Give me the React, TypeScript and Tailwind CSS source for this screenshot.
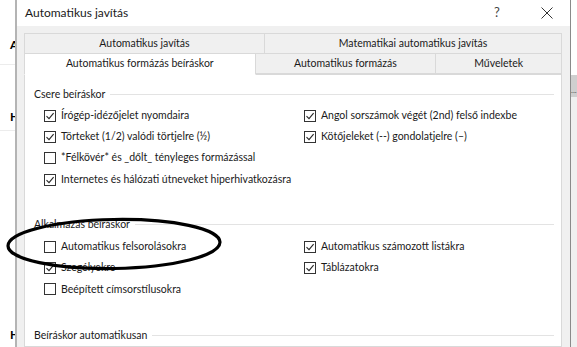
import React from "react";

const font = { fontFamily: "Lato, 'Noto Sans', sans-serif" };

const Check = ({ checked }: { checked: boolean }) => (
    <span className="w-[12px] h-[12px] border border-[#333333] bg-white flex items-center justify-center shrink-0">
        {checked && (
            <svg width="10" height="10" viewBox="0 0 10 10">
                <path d="M1.5 5.2 L4 7.6 L8.6 2.2" fill="none" stroke="#262626" strokeWidth="1.1" />
            </svg>
        )}
    </span>
);

const Option = ({ label, checked }: { label: string; checked: boolean }) => (
    <div className="h-[21.3px] flex items-center gap-[5px]">
        <Check checked={checked} />
        <span className="text-[#1a1a1a] whitespace-nowrap">{label}</span>
    </div>
);

const GroupHeader = ({ title }: { title: string }) => (
    <div className="h-[21px] flex items-center pr-[7px]">
        <span className="text-[#1a1a1a] whitespace-nowrap">{title}</span>
        <div className="flex-1 h-px bg-[#e3e3e3] ml-[5px]" />
    </div>
);

const Tab = ({ label, w, selected }: { label: string; w: string; selected?: boolean }) => (
    <div
        className={`${w} h-[21px] flex items-center justify-center border border-[#d9d9d9] -ml-px first:ml-0 ${
            selected ? "bg-white border-b-white h-[22px] relative z-10" : "bg-[#f0f0f0]"
        }`}
    >
        {label}
    </div>
);

export default function App() {
    return (
        <div className="w-[577px] h-[347px] overflow-hidden bg-white flex relative text-[10.5px]" style={font}>
            {/* window behind, left part */}
            <div className="w-[15px] shrink-0 flex flex-col">
                <div className="h-[38px] shrink-0" />
                <div className="pl-[10px] font-bold text-[12px] text-black h-[14px] leading-[14px] shrink-0">A</div>
                <div className="h-[12px] shrink-0" />
                <div className="h-px bg-[#ececec] shrink-0" />
                <div className="h-[45px] shrink-0" />
                <div className="pl-[10px] font-bold text-[12px] text-black h-[14px] leading-[14px] shrink-0">H</div>
                <div className="h-[6px] shrink-0" />
                <div className="h-px bg-[#ececec] shrink-0" />
                <div className="h-[197px] shrink-0" />
                <div className="pl-[10px] font-bold text-[12px] text-black h-[14px] leading-[14px] shrink-0">H</div>
            </div>

            {/* dialog */}
            <div className="w-[556px] shrink-0 border-l-2 border-r border-l-[#b4b4b4] border-r-[#8a8a8a] bg-[#f0f0f0] flex flex-col">
                <div className="h-[26px] shrink-0 bg-white flex items-center pl-[8px] text-[12px] text-[#1a1a1a]">
                    <span className="flex-1">Automatikus javítás</span>
                    <span className="w-[20px] text-center text-[13px] text-[#444] mr-[34px]">?</span>
                    <svg width="12" height="12" viewBox="0 0 12 12" className="mr-[17px]">
                        <path d="M0.5 0.5 L11.5 11.5 M11.5 0.5 L0.5 11.5" stroke="#333" strokeWidth="1" />
                    </svg>
                </div>

                <div className="pl-[7px] pr-[8px] pt-[7px] text-[#1a1a1a] flex-1 flex flex-col min-h-0">
                    <div className="flex shrink-0">
                        <Tab label="Automatikus javítás" w="w-[241px]" />
                        <Tab label="Matematikai automatikus javítás" w="w-[298px]" />
                    </div>
                    <div className="flex -mt-px shrink-0">
                        <Tab label="Automatikus formázás beíráskor" w="w-[232px]" selected />
                        <Tab label="Automatikus formázás" w="w-[182px]" />
                        <Tab label="Műveletek" w="w-[127px]" />
                    </div>

                    <div className="bg-white border border-[#d9d9d9] -mt-px flex-1 pl-[9px] pt-[9px]">
                        <GroupHeader title="Csere beíráskor" />
                        <div className="flex pl-[10px]">
                            <div className="w-[260px]">
                                <Option label="Írógép-idézőjelet nyomdaira" checked />
                                <Option label="Törteket (1/2) valódi törtjelre (½)" checked />
                                <Option label="*Félkövér* és _dőlt_ tényleges formázással" checked={false} />
                                <Option label="Internetes és hálózati útneveket hiperhivatkozásra" checked />
                            </div>
                            <div className="flex-1">
                                <Option label="Angol sorszámok végét (2nd) felső indexbe" checked />
                                <Option label="Kötőjeleket (--) gondolatjelre (–)" checked />
                            </div>
                        </div>

                        <div className="h-[24px]" />
                        <GroupHeader title="Alkalmazás beíráskor" />
                        <div className="flex pl-[10px] pt-[1px]">
                            <div className="w-[260px]">
                                <Option label="Automatikus felsorolásokra" checked={false} />
                                <Option label="Szegélyekre" checked />
                                <Option label="Beépített címsorstílusokra" checked={false} />
                            </div>
                            <div className="flex-1">
                                <Option label="Automatikus számozott listákra" checked />
                                <Option label="Táblázatokra" checked />
                            </div>
                        </div>

                        <div className="h-[25px]" />
                        <GroupHeader title="Beíráskor automatikusan" />
                    </div>
                </div>
            </div>

            {/* window behind, right part */}
            <div className="flex-1 flex flex-col bg-[#f0f0f0]">
                <div className="h-[75px] bg-white shrink-0" />
                <div className="h-[22px] bg-[#cfcfcf] text-[8px] leading-[30px] text-[#555] shrink-0">...</div>
            </div>

            {/* hand-drawn highlight */}
            <svg className="absolute inset-0 pointer-events-none" width="577" height="347">
                <ellipse cx="114" cy="244" rx="106" ry="24.5" fill="none" stroke="#000" strokeWidth="3.2" transform="rotate(-1 114 244)" />
            </svg>
        </div>
    );
}
